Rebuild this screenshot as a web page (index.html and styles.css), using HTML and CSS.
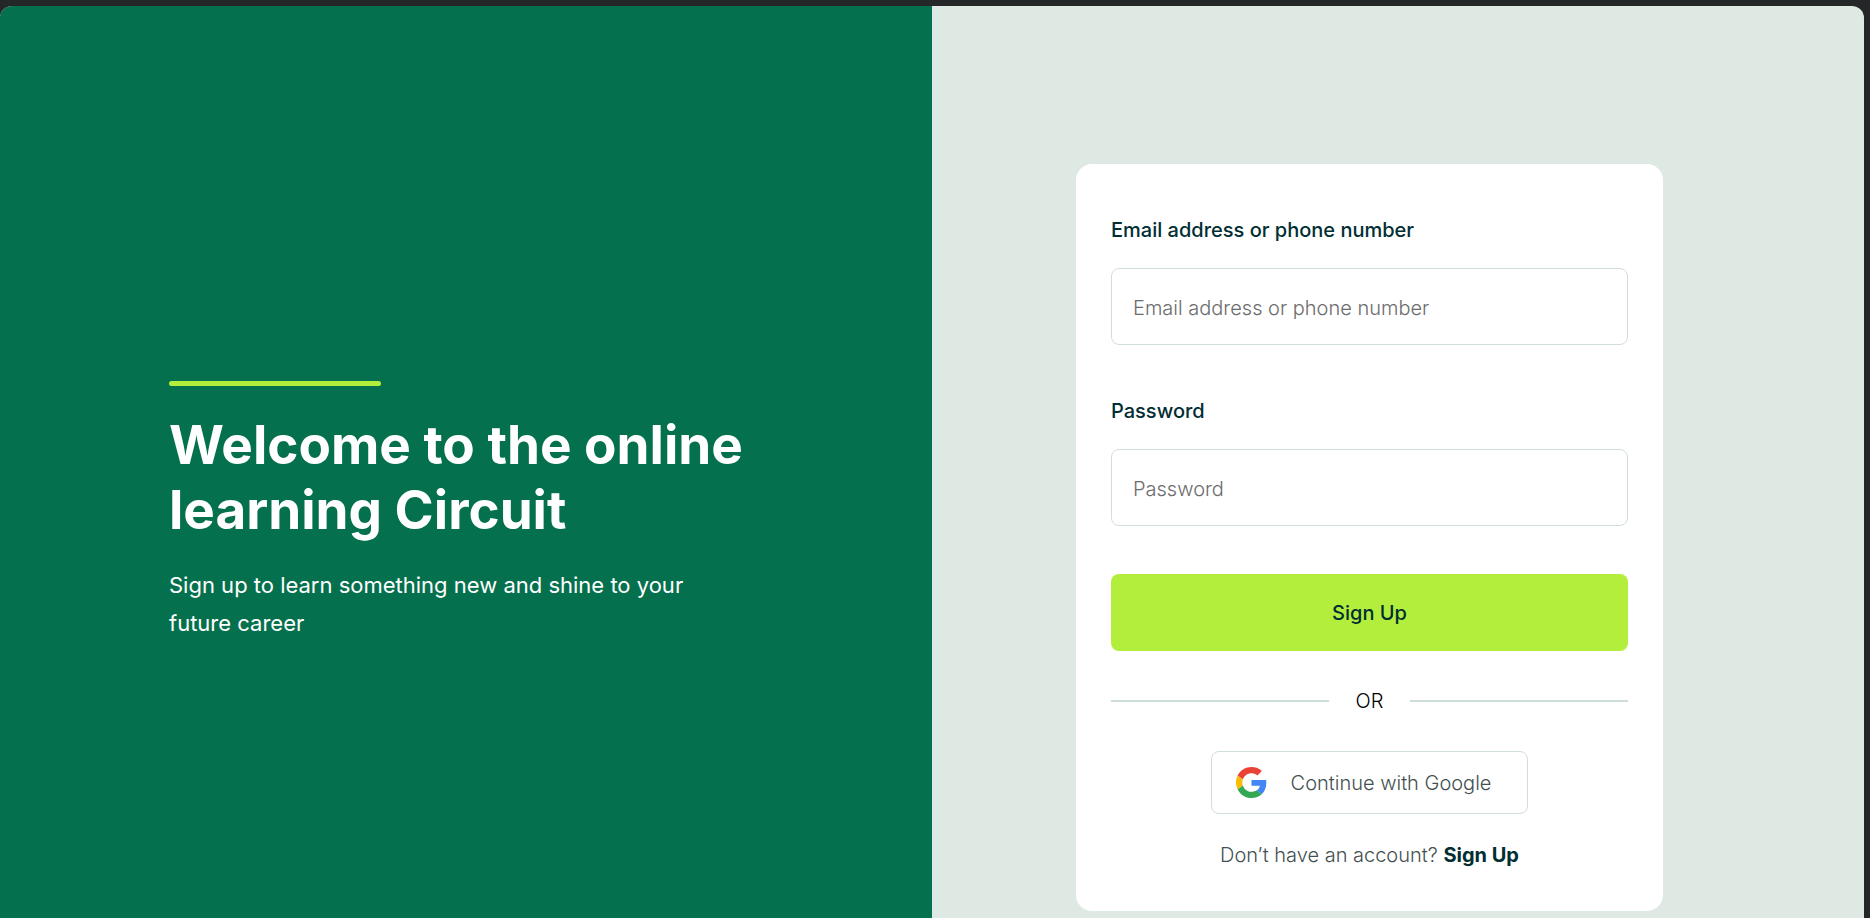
FILE: index.html
```html
<!DOCTYPE html>
<html lang="en">
<head>
<meta charset="utf-8">
<meta name="viewport" content="width=device-width, initial-scale=1">
<title>Sign Up</title>
<link rel="stylesheet" href="styles.css">
</head>
<body>
<main class="page">
  <section class="intro">
    <div class="accent"></div>
    <h1 class="title">Welcome to the online learning Circuit</h1>
    <p class="subtitle">Sign up to learn something new and shine to your future career</p>
  </section>
  <section class="panel">
    <form class="card">
      <div class="fields">
        <div class="field">
          <label class="label" for="email">Email address or phone number</label>
          <input class="input" id="email" type="text" placeholder="Email address or phone number">
        </div>
        <div class="field">
          <label class="label" for="password">Password</label>
          <input class="input" id="password" type="password" placeholder="Password">
        </div>
      </div>
      <button class="submit" type="submit">Sign Up</button>
      <div class="divider"><span>OR</span></div>
      <button class="google" type="button">
        <svg class="google-icon" viewBox="0 0 48 48" aria-hidden="true">
          <path fill="#EA4335" d="M24 9.5c3.54 0 6.71 1.22 9.21 3.6l6.85-6.85C35.9 2.38 30.47 0 24 0 14.62 0 6.51 5.38 2.56 13.22l7.98 6.19C12.43 13.72 17.74 9.5 24 9.5z"/>
          <path fill="#4285F4" d="M46.98 24.55c0-1.57-.15-3.09-.38-4.55H24v9.02h12.94c-.58 2.96-2.26 5.48-4.78 7.18l7.73 6c4.51-4.18 7.09-10.36 7.09-17.65z"/>
          <path fill="#FBBC05" d="M10.53 28.59c-.48-1.45-.76-2.99-.76-4.59s.27-3.14.76-4.59l-7.98-6.19C.92 16.46 0 20.12 0 24c0 3.88.92 7.54 2.56 10.78l7.97-6.19z"/>
          <path fill="#34A853" d="M24 48c6.48 0 11.93-2.13 15.89-5.81l-7.73-6c-2.15 1.45-4.92 2.3-8.16 2.3-6.26 0-11.57-4.22-13.47-9.91l-7.98 6.19C6.51 42.62 14.62 48 24 48z"/>
        </svg>
        <span>Continue with Google</span>
      </button>
      <p class="account">Don’t have an account? <a class="account-link" href="#">Sign Up</a></p>
    </form>
  </section>
</main>
</body>
</html>
```
FILE: styles.css
```css
* {
  box-sizing: border-box;
}

body {
  margin: 0;
  padding: 6px 6px 0 0;
  background: #252628;
  font-family: Inter, "Open Sans", sans-serif;
  font-size: 20px;
  font-weight: 300;
  line-height: 32px;
}

.page {
  display: grid;
  grid-template-columns: 1fr 1fr;
  min-height: calc(100vh - 6px);
  overflow: hidden;
  border-radius: 12px 12px 0 0;
  background: #dfe9e4;
}

.intro {
  padding: 375px 169px 0;
  background: #05704d;
  color: #fff;
}

.accent {
  width: 212px;
  height: 5px;
  border-radius: 3px;
  background: #b4ee3c;
}

.title {
  margin: 27px 0 23px;
  font-size: 53px;
  font-weight: 700;
  line-height: 65px;
}

.subtitle {
  max-width: 560px;
  margin: 0;
  font-size: 22px;
  font-weight: 400;
  line-height: 38px;
}

.panel {
  padding: 158px 201px 7px 144px;
}

.card {
  display: flex;
  flex-direction: column;
  padding: 50px 35px 40px;
  border-radius: 16px;
  background: #fff;
}

.fields {
  display: grid;
  gap: 50px;
}

.field {
  display: grid;
  gap: 22px;
}

.label {
  color: #012e33;
  font-weight: 500;
}

.input {
  width: 100%;
  height: 77px;
  padding: 2px 21px 0;
  border: 1px solid #d2dedd;
  border-radius: 8px;
  background: #fff;
  color: #012e33;
  font: inherit;
}

.input::placeholder {
  color: #6c6c6c;
}

.submit {
  height: 77px;
  margin-top: 48px;
  border: 0;
  border-radius: 8px;
  background: #b4ee3c;
  color: #012e33;
  font: inherit;
  font-weight: 500;
}

.divider {
  display: flex;
  align-items: center;
  gap: 27px;
  margin: 34px 0;
  color: #000;
}

.divider::before,
.divider::after {
  content: "";
  flex: 1;
  height: 2px;
  background: #cedcdc;
}

.google {
  display: flex;
  align-items: center;
  align-self: center;
  gap: 24px;
  height: 63px;
  padding: 0 36px 0 24px;
  border: 1px solid #d2dedd;
  border-radius: 8px;
  background: #fff;
  color: #445050;
  font: inherit;
}

.google-icon {
  width: 31px;
  height: 31px;
}

.account {
  margin: 25px 0 0;
  color: #445050;
  text-align: center;
}

.account-link {
  color: #012e33;
  font-weight: 700;
  text-decoration: none;
}
```
